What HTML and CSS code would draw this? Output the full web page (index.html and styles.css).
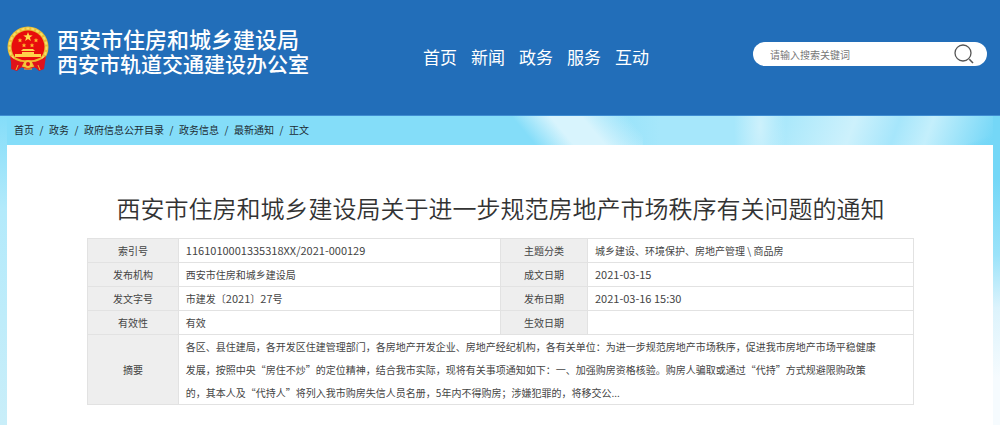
FILE: index.html
```html
<!DOCTYPE html>
<html lang="zh-CN">
<head>
  <meta charset="UTF-8">
  <meta name="viewport" content="width=device-width, initial-scale=1.0">
  <title>西安市住房和城乡建设局</title>
  <link rel="stylesheet" href="styles.css">
</head>
<body>
  <header class="header">
    <a class="logo" href="#">
      <svg class="emblem" viewBox="0 0 42 46" aria-hidden="true">
        <path d="M5 29 L4 43 L10 45 L14 41 L21 44 L28 41 L32 45 L37 43 L37 29 Z" fill="#e0121b"/>
        <circle cx="21" cy="21" r="20.500" fill="#e9bd35"/>
        <circle cx="21" cy="21" r="18.500" fill="none" stroke="#f8dd67" stroke-width="2" stroke-dasharray="3 2"/>
        <circle cx="21" cy="21" r="16.500" fill="#e80c0c"/>
        <path d="M21 6 L22.200 9.300 L25.700 9.400 L22.900 11.500 L23.900 14.900 L21 12.900 L18.100 14.900 L19.100 11.500 L16.300 9.400 L19.800 9.300 Z" fill="#ffdc4a"/>
        <g fill="#ffb52e">
          <path d="M13 12 l.7 1.400 h1.600 l-1.200 1.200 l.4 1.600 l-1.500 -.8 l-1.500 .8 l.4 -1.600 l-1.200 -1.200 h1.600 Z"/>
          <path d="M29 12 l.7 1.400 h1.600 l-1.200 1.200 l.4 1.600 l-1.500 -.8 l-1.500 .8 l.4 -1.600 l-1.200 -1.200 h1.600 Z"/>
          <path d="M17 17 l.7 1.400 h1.600 l-1.200 1.200 l.4 1.600 l-1.500 -.8 l-1.500 .8 l.4 -1.600 l-1.200 -1.200 h1.600 Z"/>
          <path d="M25 17 l.7 1.400 h1.600 l-1.200 1.200 l.4 1.600 l-1.500 -.8 l-1.500 .8 l.4 -1.600 l-1.200 -1.200 h1.600 Z"/>
        </g>
        <path d="M16 23 H26 L28 25 H14 Z M15 26 H27 V28 H34 V31 H8 V28 H15 Z" fill="#ffd24a"/>
        <path d="M7 31 Q21 38 35 31 L33 35 Q21 41 9 35 Z" fill="#efb92f"/>
        <path d="M3 30 Q10 36 17 36 L14 42 L5 43 Z M39 30 Q32 36 25 36 L28 42 L37 43 Z" fill="#e0121b"/>
        <circle cx="21" cy="38" r="4" fill="#f5c63a"/>
        <circle cx="21" cy="38" r="2" fill="#e0121b"/>
        <path d="M11 39 L9 44 M31 39 L33 44 M17 43 H25" stroke="#f0b52f" stroke-width="1" fill="none"/>
      </svg>
      <span class="logo-text">
        <span class="logo-main">西安市住房和城乡建设局</span>
        <span class="logo-sub">西安市轨道交通建设办公室</span>
      </span>
    </a>
    <nav class="nav">
      <a href="#">首页</a>
      <a href="#">新闻</a>
      <a href="#">政务</a>
      <a href="#">服务</a>
      <a href="#">互动</a>
    </nav>
    <form class="search">
      <input type="text" name="keyword" placeholder="请输入搜索关键词" aria-label="请输入搜索关键词">
      <button type="button" aria-label="搜索">
        <svg viewBox="0 0 20 20" aria-hidden="true">
          <circle cx="9" cy="9" r="8" fill="none" stroke="#555" stroke-width="1.300"/>
          <path d="M15.300 15.300 L19 19" stroke="#555" stroke-width="1.600"/>
        </svg>
      </button>
    </form>
  </header>

  <main class="page">
    <nav class="crumbs">
      <a href="#">首页</a><i>/</i>
      <a href="#">政务</a><i>/</i>
      <a href="#">政府信息公开目录</a><i>/</i>
      <a href="#">政务信息</a><i>/</i>
      <a href="#">最新通知</a><i>/</i>
      <span>正文</span>
    </nav>

    <article class="content">
      <h1>西安市住房和城乡建设局关于进一步规范房地产市场秩序有关问题的通知</h1>
      <table class="info">
        <colgroup>
          <col class="col-name">
          <col class="col-value">
          <col class="col-name2">
          <col>
        </colgroup>
        <tr>
          <th scope="row">索引号</th>
          <td><span class="num">1161010001335318XX/2021-000129</span></td>
          <th scope="row">主题分类</th>
          <td>城乡建设、环境保护、房地产管理 \ 商品房</td>
        </tr>
        <tr>
          <th scope="row">发布机构</th>
          <td>西安市住房和城乡建设局</td>
          <th scope="row">成文日期</th>
          <td><span class="num">2021-03-15</span></td>
        </tr>
        <tr>
          <th scope="row">发文字号</th>
          <td>市建发〔<span class="num">2021</span>〕<span class="num">27</span>号</td>
          <th scope="row">发布日期</th>
          <td><span class="num">2021-03-16 15:30</span></td>
        </tr>
        <tr>
          <th scope="row">有效性</th>
          <td>有效</td>
          <th scope="row">生效日期</th>
          <td></td>
        </tr>
        <tr>
          <th scope="row">摘要</th>
          <td class="summary" colspan="3">各区、县住建局，各开发区住建管理部门，各房地产开发企业、房地产经纪机构，各有关单位：为进一步规范房地产市场秩序，促进我市房地产市场平稳健康<br>发展，按照中央“房住不炒”的定位精神，结合我市实际，现将有关事项通知如下：一、加强购房资格核验。购房人骗取或通过“代持”方式规避限购政策<br>的，其本人及“代持人”将列入我市购房失信人员名册，5年内不得购房；涉嫌犯罪的，将移交公...</td>
        </tr>
      </table>
    </article>
  </main>
</body>
</html>
```

FILE: styles.css
```css
* {
  box-sizing: border-box;
}
body {
  margin: 0;
  min-height: 100vh;
  display: flex;
  flex-direction: column;
  font-family: "Noto Sans CJK SC", sans-serif;
  font-size: 10px;
  color: #444;
}
a {
  color: inherit;
  text-decoration: none;
}
.header {
  display: grid;
  grid-template-columns: 423fr 330fr 234fr;
  align-items: start;
  height: 116px;
  padding: 26px 13px 0 0;
  background-color: #226eb9;
  border-bottom: 1px solid #3f8dd2;
  color: #fff;
}
.logo {
  display: flex;
  gap: 8px;
  padding-left: 7px;
}
.emblem {
  width: 42px;
  height: 46px;
}
.logo-text {
  display: flex;
  flex-direction: column;
  font-weight: 500;
  line-height: 25px;
  white-space: nowrap;
}
.logo-main {
  font-size: 22px;
}
.logo-sub {
  font-size: 21px;
}
.nav {
  display: flex;
  gap: 14px;
  padding-top: 19px;
  font-size: 17px;
  line-height: 24px;
}
.search {
  display: flex;
  align-items: center;
  height: 24px;
  margin-top: 16px;
  padding: 0 13px 0 17px;
  background-color: #fff;
  border-radius: 12px;
}
.search input {
  flex: 1;
  min-width: 0;
  padding: 0;
  border: none;
  outline: none;
  background: none;
  font: inherit;
}
.search input::placeholder {
  color: #777;
}
.search button {
  display: flex;
  padding: 0;
  border: none;
  background: none;
  cursor: pointer;
}
.search svg {
  width: 20px;
  height: 20px;
}
/* sky: the two side strips first, then the clouds behind the breadcrumbs */
.page {
  flex: 1;
  display: flex;
  flex-direction: column;
  padding: 0 7px;
  background:
    linear-gradient(to bottom, #84ddf9, #b3eafb 30%, #c9eef9) left / 7px 100% no-repeat,
    linear-gradient(to bottom, #74d7f7 20%, #9be3fa 45%, #dcf3fc 62%, #f6fbfe 85%) right / 7px 100% no-repeat,
    linear-gradient(160deg, transparent 80%, #74d7f7 92%) right top / 120px 30px no-repeat,
    linear-gradient(50deg, transparent 15%, #d8f4fd 40%, #d8f4fd 60%, transparent 90%) 59% 0 / 130px 30px no-repeat,
    radial-gradient(ellipse 26px 90px at 76% 10px, #cdf1fc, transparent),
    linear-gradient(110deg, transparent 70%, #cdf1fc 77%, #a6e6fb 81%, #c4effc 84%, #74d7f7 90%),
    linear-gradient(to right, #84ddf9 55%, #a6e7fb 66%);
}
.crumbs {
  display: flex;
  padding: 4px 7px 5px;
  line-height: 20px;
  color: #1c2b33;
}
.crumbs i {
  width: 15px;
  font-style: normal;
  text-align: center;
}
.content {
  flex: 1;
  padding: 45px 79px 20px 80px;
  background-color: #fff;
}
h1 {
  margin: 0 0 13px;
  font-size: 24px;
  font-weight: 350;
  line-height: 35px;
  text-align: center;
  white-space: nowrap;
  color: #333;
}
.info {
  width: 100%;
  table-layout: fixed;
  border-collapse: collapse;
}
.col-name {
  width: 11%;
}
.col-value {
  width: 39%;
}
.col-name2 {
  width: 87px;
}
th, td {
  height: 24px;
  padding: 0 7px;
  border: 1px solid #e2e2e2;
  line-height: 23px;
  text-align: left;
}
th {
  background-color: #eee;
  font-weight: 400;
  text-align: center;
}
.num {
  font-size: 11px;
}
.summary {
  white-space: nowrap;
}
```
